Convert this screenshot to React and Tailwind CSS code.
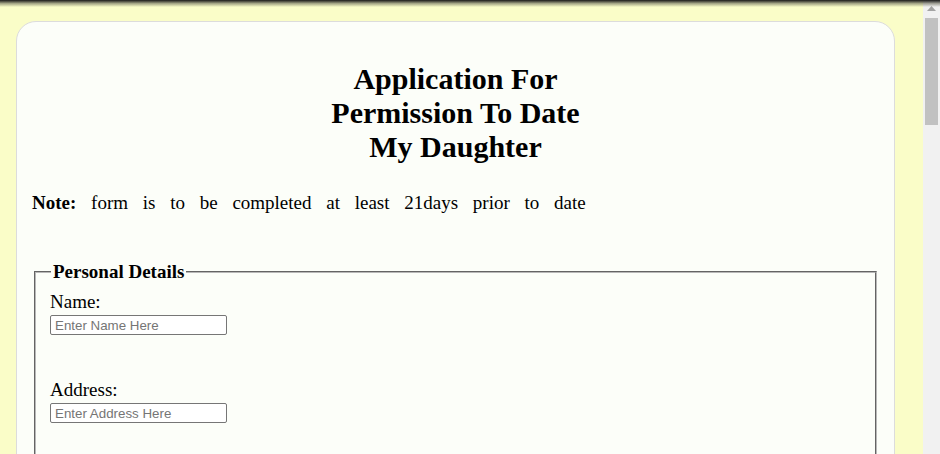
export default function App() {
  return (
    <div className="relative flex h-screen overflow-hidden bg-[#fafdc8]">
      {/* top shade */}
      <div className="pointer-events-none absolute inset-x-0 top-0 h-[7px] bg-gradient-to-b from-[#1a1a1a] via-[#6b6b5a]/60 to-transparent" />

      {/* page */}
      <div className="flex-1 overflow-hidden font-['Liberation_Serif',serif] text-black">
        <div className="ml-4 mt-[21px] w-[879px] rounded-[20px] border border-[#dcdcdc] bg-[#fcfef9] px-[15px] pt-[15px] pb-10">
          <h1 className="mx-auto mt-[25px] w-[280px] text-center text-[30px] font-bold leading-[34px]">
            Application For Permission To Date My Daughter
          </h1>

          <p className="mt-[28px] text-[19px] leading-[22px] [word-spacing:10px]">
            <b>Note:</b> form is to be completed at least 21days prior to date
          </p>

          <fieldset className="mx-[2px] mt-[47px] min-h-[260px] border-2 border-[#b8b8b8] px-[14px] pt-[8px] pb-3 [border-style:groove]">
            <legend className="ml-px px-[2px] text-[19px] font-bold leading-[22px]">Personal Details</legend>

            <label className="block text-[19px] leading-[22px]">Name:</label>
            <input
              type="text"
              placeholder="Enter Name Here"
              className="mt-[2px] block h-[20px] w-[177px] rounded-[2px] border border-[#767676] bg-white px-[4px] font-['Liberation_Sans',Arial,sans-serif] text-[13.33px] placeholder:text-[#757575]"
            />

            <label className="mt-[44px] block text-[19px] leading-[22px]">Address:</label>
            <input
              type="text"
              placeholder="Enter Address Here"
              className="mt-[2px] block h-[20px] w-[177px] rounded-[2px] border border-[#767676] bg-white px-[4px] font-['Liberation_Sans',Arial,sans-serif] text-[13.33px] placeholder:text-[#757575]"
            />
          </fieldset>
        </div>
      </div>

      {/* scrollbar */}
      <div className="flex w-[17px] shrink-0 flex-col items-center bg-[#f1f1f1]">
        <div className="flex h-[17px] w-full items-center justify-center">
          <svg width="9" height="5" viewBox="0 0 9 5">
            <path d="M0 5 L4.5 0 L9 5 Z" fill="#a3a3a3" />
          </svg>
        </div>
        <div className="mt-px h-[107px] w-[13px] bg-[#c1c1c1]" />
      </div>
    </div>
  );
}
